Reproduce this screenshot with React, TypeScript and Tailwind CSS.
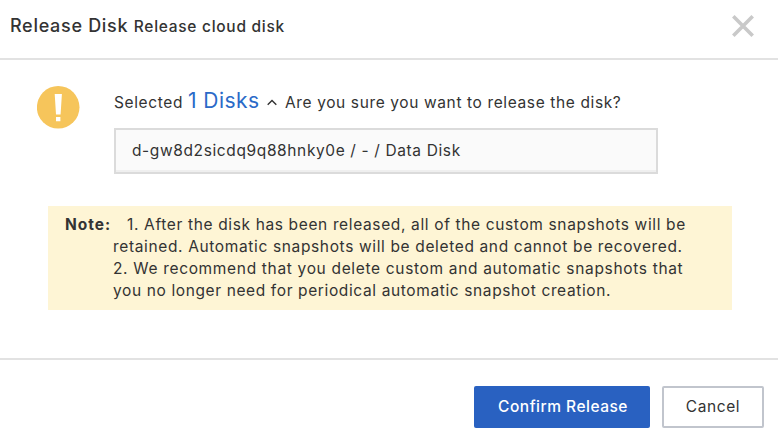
export default function App() {
  return (
    <div className="flex h-[444px] w-[778px] flex-col overflow-hidden bg-white font-['Inter','Liberation_Sans',sans-serif] text-[15.5px] text-[#333]">
      <header className="flex h-[60px] shrink-0 items-start justify-between border-b-2 border-[#e2e2e2] pl-[10px] pr-[24px]">
        <h1 className="mt-[12px] whitespace-nowrap text-[18px] font-medium leading-[28px] tracking-[0.7px]">
          Release Disk <span className="text-[15.5px] tracking-[0.72px]">Release cloud disk</span>
        </h1>
        <button aria-label="Close" className="mt-[15px]">
          <svg width="22" height="22" viewBox="0 0 22 22" fill="none" stroke="#c9c9c9" strokeWidth="3.6">
            <path d="M1.3 1.3 20.7 20.7M20.7 1.3 1.3 20.7" />
          </svg>
        </button>
      </header>
      <main className="flex h-[298px] shrink-0 flex-col">
        <div className="flex pl-[37px] pt-[26px]">
          <svg width="43" height="43" viewBox="0 0 43 43">
            <circle cx="21.2" cy="21.3" r="21.3" fill="#f6c55b" />
            <path d="M17.7 8h7.2l-1.3 20.5h-4.6zM19 31h4.4v4.2H19z" fill="#fff" />
          </svg>
          <div className="ml-[34px]">
            <p className="flex h-[32px] items-baseline whitespace-nowrap tracking-[0.62px]">
              <span className="w-[70px]">Selected</span>
              <span className="ml-[4px] w-[71px] text-[21px] leading-[30px] tracking-[0.45px] text-[#2a6ac8]">1 Disks</span>
              <svg className="ml-[8px] self-center" width="10" height="7" viewBox="0 0 10 7" fill="none" stroke="#333" strokeWidth="1.4">
                <path d="m.7 5.8 4.3-4.4 4.3 4.4" />
              </svg>
              <span className="ml-[8px]">Are you sure you want to release the disk?</span>
            </p>
            <div className="mt-[10px] flex h-[46px] w-[544px] items-center border-2 border-[#dbdbdb] bg-[#fafafa] pl-[16px] tracking-[0.62px] shadow-[inset_0_-2px_0_#efefef]">
              d-gw8d2sicdq9q88hnky0e / - / Data Disk
            </div>
          </div>
        </div>
        <div className="ml-[48px] mt-[32px] flex h-[104px] w-[684px] bg-[#fef5d5] pt-[8px] leading-[22px] tracking-[0.64px]">
          <b className="w-[65px] shrink-0 pl-[17px] tracking-[1px]">Note:</b>
          <div className="whitespace-nowrap">
            <p className="pl-[14px]">1. After the disk has been released, all of the custom snapshots will be</p>
            <p>retained. Automatic snapshots will be deleted and cannot be recovered.</p>
            <p className="tracking-[0.67px]">2. We recommend that you delete custom and automatic snapshots that</p>
            <p className="tracking-[0.62px]">you no longer need for periodical automatic snapshot creation.</p>
          </div>
        </div>
      </main>
      <footer className="flex flex-1 items-start justify-end gap-[12px] border-t-2 border-[#e2e2e2] pr-[14px] pt-[26px] tracking-[0.6px]">
        <button className="h-[42px] w-[176px] rounded-[2px] bg-[#2961c1] pl-[2px] font-medium tracking-[0.5px] text-white">Confirm Release</button>
        <button className="h-[42px] w-[102px] rounded-[2px] border-2 border-[#c1c5cd] bg-white">Cancel</button>
      </footer>
    </div>
  );
}
